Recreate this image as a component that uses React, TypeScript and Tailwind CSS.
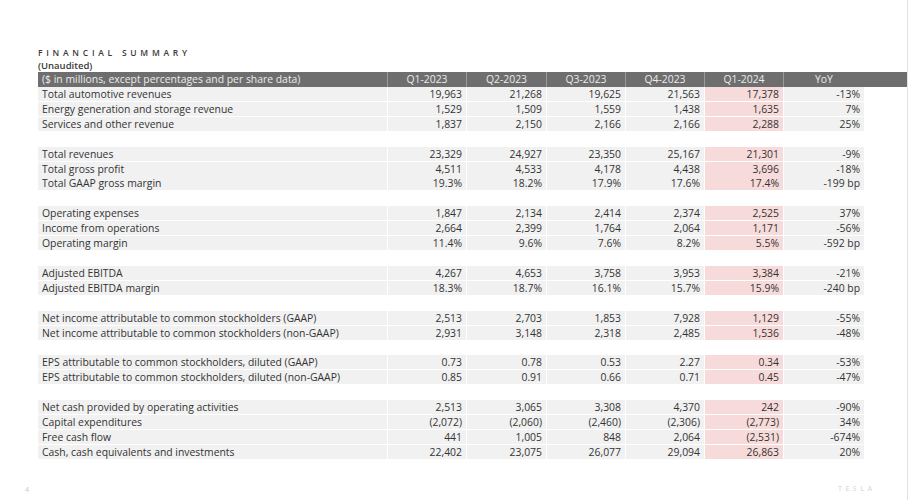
const cols = ["Q1-2023", "Q2-2023", "Q3-2023", "Q4-2023", "Q1-2024", "YoY"]

type Row = [string, string, string, string, string, string, string]

const groups: Row[][] = [
  [
    ["Total automotive revenues", "19,963", "21,268", "19,625", "21,563", "17,378", "-13%"],
    ["Energy generation and storage revenue", "1,529", "1,509", "1,559", "1,438", "1,635", "7%"],
    ["Services and other revenue", "1,837", "2,150", "2,166", "2,166", "2,288", "25%"],
  ],
  [
    ["Total revenues", "23,329", "24,927", "23,350", "25,167", "21,301", "-9%"],
    ["Total gross profit", "4,511", "4,533", "4,178", "4,438", "3,696", "-18%"],
    ["Total GAAP gross margin", "19.3%", "18.2%", "17.9%", "17.6%", "17.4%", "-199 bp"],
  ],
  [
    ["Operating expenses", "1,847", "2,134", "2,414", "2,374", "2,525", "37%"],
    ["Income from operations", "2,664", "2,399", "1,764", "2,064", "1,171", "-56%"],
    ["Operating margin", "11.4%", "9.6%", "7.6%", "8.2%", "5.5%", "-592 bp"],
  ],
  [
    ["Adjusted EBITDA", "4,267", "4,653", "3,758", "3,953", "3,384", "-21%"],
    ["Adjusted EBITDA margin", "18.3%", "18.7%", "16.1%", "15.7%", "15.9%", "-240 bp"],
  ],
  [
    ["Net income attributable to common stockholders (GAAP)", "2,513", "2,703", "1,853", "7,928", "1,129", "-55%"],
    ["Net income attributable to common stockholders (non-GAAP)", "2,931", "3,148", "2,318", "2,485", "1,536", "-48%"],
  ],
  [
    ["EPS attributable to common stockholders, diluted (GAAP)", "0.73", "0.78", "0.53", "2.27", "0.34", "-53%"],
    ["EPS attributable to common stockholders, diluted (non-GAAP)", "0.85", "0.91", "0.66", "0.71", "0.45", "-47%"],
  ],
  [
    ["Net cash provided by operating activities", "2,513", "3,065", "3,308", "4,370", "242", "-90%"],
    ["Capital expenditures", "(2,072)", "(2,060)", "(2,460)", "(2,306)", "(2,773)", "34%"],
    ["Free cash flow", "441", "1,005", "848", "2,064", "(2,531)", "-674%"],
    ["Cash, cash equivalents and investments", "22,402", "23,075", "26,077", "29,094", "26,863", "20%"],
  ],
]

const grid = "grid grid-cols-[349px_79px_80px_79px_79px_79px_81px]"

function DataRow({ row }: { row: Row }) {
  return (
    <div className={`${grid} h-[14.92px] border-b border-white text-[#333333]`}>
      <div className="bg-[#f1f1f1] pl-[4px] leading-[14px]">{row[0]}</div>
      {row.slice(1).map((v, i) => (
        <div
          key={i}
          className={`border-l border-white pr-[4px] text-right leading-[14px] ${
            i === 4 ? "bg-[#f7dbdb]" : "bg-[#f1f1f1]"
          }`}
        >
          {v}
        </div>
      ))}
    </div>
  )
}

export default function App() {
  return (
    <div
      className="relative h-[500px] w-[908px] overflow-hidden border-r border-[#e2e2e2] bg-white"
      style={{ fontFamily: '"Open Sans", "Liberation Sans", sans-serif' }}
    >
      <div className="pl-[38px] pt-[47px]">
        <div className="text-[8.5px] font-semibold leading-[12px] tracking-[0.44em] text-[#3a3a3a]">
          FINANCIAL SUMMARY
        </div>
        <div className="text-[9.5px] font-semibold leading-[13px] text-[#3a3a3a]">(Unaudited)</div>

        <div className="text-[10.4px]">
          <div className={`${grid} h-[15px] bg-[#6e6e6e] text-[#ececec]`}>
            <div className="pl-[4px] leading-[15px]">($ in millions, except percentages and per share data)</div>
            {cols.map((c) => (
              <div key={c} className="border-l border-[#9a9a9a] text-center leading-[15px]">
                {c}
              </div>
            ))}
          </div>
          {groups.map((g, gi) => (
            <div key={gi}>
              {g.map((r) => (
                <DataRow key={r[0]} row={r} />
              ))}
              {gi < groups.length - 1 && <div className="h-[14.92px]" />}
            </div>
          ))}
        </div>
      </div>

      <div className="absolute left-[25px] top-[485px] text-[7px] text-[#c8c8c8]">4</div>
      <div className="absolute left-[838px] top-[484px] text-[7px] font-semibold tracking-[0.5em] text-[#dcdcdc]">
        TESLA
      </div>
    </div>
  )
}
